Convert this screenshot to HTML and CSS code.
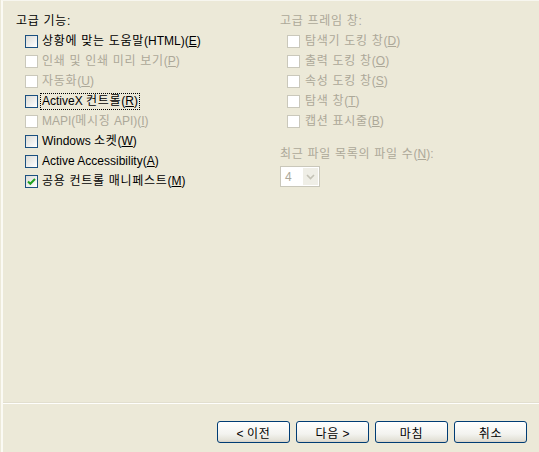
FILE: index.html
```html
<!DOCTYPE html>
<html lang="ko">
<head>
    <meta charset="UTF-8">
    <meta name="viewport" content="width=device-width, initial-scale=1.0">
    <title>고급 기능</title>
    <link rel="stylesheet" href="styles.css">
</head>
<body>
    <div class="page">
        <div class="content">
            <div class="column left">
                <div class="heading"><span class="ko">고급 기능</span>:</div>
                <label class="check"><span class="box"></span><span class="text"><span class="ko">상황에 맞는 도움말</span>(HTML)(<u>E</u>)</span></label>
                <label class="check disabled"><span class="box"></span><span class="text"><span class="ko">인쇄 및 인쇄 미리 보기</span>(<u>P</u>)</span></label>
                <label class="check disabled"><span class="box"></span><span class="text"><span class="ko">자동화</span>(<u>U</u>)</span></label>
                <label class="check"><span class="box"></span><span class="text focus">ActiveX <span class="ko">컨트롤</span>(<u>R</u>)</span></label>
                <label class="check disabled"><span class="box"></span><span class="text">MAPI(<span class="ko">메시징</span> API)(<u>I</u>)</span></label>
                <label class="check"><span class="box"></span><span class="text">Windows <span class="ko">소켓</span>(<u>W</u>)</span></label>
                <label class="check"><span class="box"></span><span class="text">Active Accessibility(<u>A</u>)</span></label>
                <label class="check"><span class="box checked"><svg width="11" height="11" viewBox="0 0 11 11"><path d="M2 5.5 L4.3 7.8 L9 3" fill="none" stroke="#21a121" stroke-width="2"/></svg></span><span class="text"><span class="ko">공용 컨트롤 매니페스트</span>(<u>M</u>)</span></label>
            </div>
            <div class="column right disabled-group">
                <div class="heading"><span class="ko">고급 프레임 창</span>:</div>
                <label class="check disabled"><span class="box"></span><span class="text"><span class="ko">탐색기 도킹 창</span>(<u>D</u>)</span></label>
                <label class="check disabled"><span class="box"></span><span class="text"><span class="ko">출력 도킹 창</span>(<u>O</u>)</span></label>
                <label class="check disabled"><span class="box"></span><span class="text"><span class="ko">속성 도킹 창</span>(<u>S</u>)</span></label>
                <label class="check disabled"><span class="box"></span><span class="text"><span class="ko">탐색 창</span>(<u>T</u>)</span></label>
                <label class="check disabled"><span class="box"></span><span class="text"><span class="ko">캡션 표시줄</span>(<u>B</u>)</span></label>
                <div class="heading recent"><span class="ko">최근 파일 목록의 파일 수</span>(<u>N</u>):</div>
                <div class="combo">
                    <span class="combo-value">4</span>
                    <span class="combo-arrow"><svg width="9" height="6" viewBox="0 0 9 6"><path d="M1 1 L4.5 4.5 L8 1" fill="none" stroke="#c4c2b6" stroke-width="1.6"/></svg></span>
                </div>
            </div>
        </div>
        <div class="footer">
            <button class="btn">&lt; <span class="ko">이전</span></button>
            <button class="btn"><span class="ko">다음</span> &gt;</button>
            <button class="btn"><span class="ko">마침</span></button>
            <button class="btn"><span class="ko">취소</span></button>
        </div>
    </div>
</body>
</html>
```

FILE: styles.css
```css
body {
    margin: 0;
    background-color: #ece9d8;
    font-family: "Liberation Sans", "Noto Sans CJK KR", sans-serif;
    font-size: 12px;
    color: #000;
}
.ko {
    letter-spacing: 0.7px; /* Korean glyphs run a bit wider in the original */
}
.page {
    height: 451px;
    margin-left: 1px;
    border-left: 2px solid #fbfaf4;
    border-top: 1px solid #f7f6ef;
    display: flex;
    flex-direction: column;
}
.content {
    flex: 1;
    display: flex;
    padding: 10px 0 0 13px;
}
.column {
    display: flex;
    flex-direction: column;
}
.left {
    width: 264px;
}
.heading {
    height: 20px;
    line-height: 20px;
}
.check {
    display: flex;
    align-items: center;
    height: 20px;
    line-height: 20px;
    margin-left: 9px;
    gap: 4px;
}
.right .check {
    margin-left: 7px;
    gap: 5px;
}
.box {
    width: 11px;
    height: 11px;
    border: 1px solid #1c5180;
    background: linear-gradient(135deg, #dcdcd7, #ffffff);
    display: flex;
    align-items: center;
    justify-content: center;
    flex-shrink: 0;
}
.disabled .box {
    border-color: #cac8bb;
    background: #ffffff;
}
.disabled,
.disabled-group {
    color: #aca899;
}
.focus {
    outline: 1px dotted #000;
    line-height: 15px;
    padding: 0 1px;
    margin-left: -1px;
}
.recent {
    margin-top: 13px;
}
.combo {
    margin-top: 2px;
    width: 38px;
    height: 19px;
    border: 1px solid #c9c7ba;
    background: #fff;
    display: flex;
    align-items: center;
    justify-content: space-between;
}
.combo-value {
    padding-left: 4px;
    color: #aca899;
}
.combo-arrow {
    width: 15px;
    height: 17px;
    margin-right: 1px;
    background: #efeee6;
    display: flex;
    align-items: center;
    justify-content: center;
}
.footer {
    height: 31px;
    border-top: 1px solid #fefefc;
    box-shadow: 0 -1px 0 #e2dfcf;
    padding: 17px 12px 0 0;
    display: flex;
    justify-content: flex-end;
    gap: 6px;
}
.btn {
    width: 73px;
    height: 22px;
    padding: 0;
    border: 1px solid #003c74;
    border-radius: 3px;
    background: linear-gradient(#ffffff, #f3f3ef 60%, #e4e2d8 90%, #d6d0c5);
    font-family: "Liberation Sans", "Noto Sans CJK KR", sans-serif;
    font-size: 12px;
    color: #000;
}
```
